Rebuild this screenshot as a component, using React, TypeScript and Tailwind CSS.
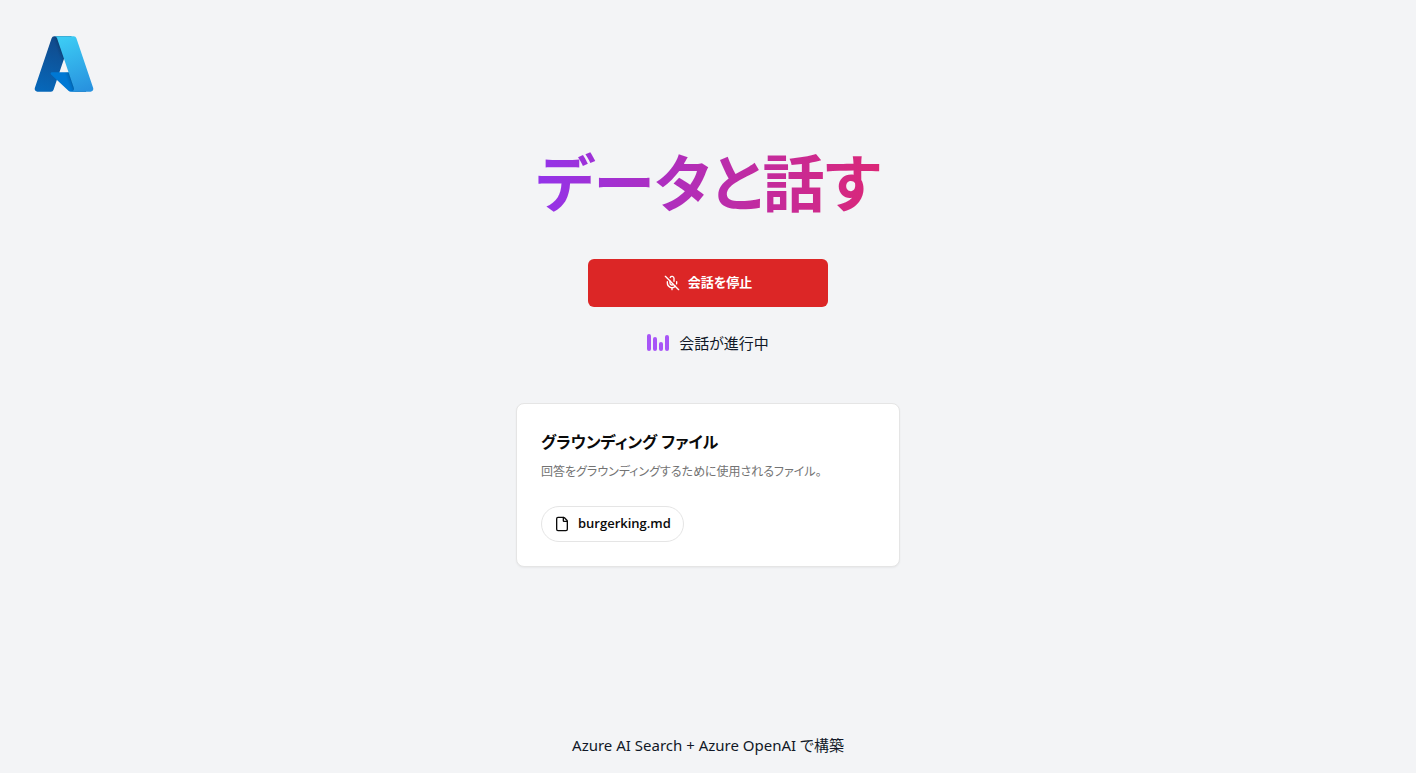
import { File, MicOff } from 'lucide-react'

const bars = [17, 14, 9, 16]

const files = [{ id: 'burgerking', name: 'burgerking.md' }]

function AzureLogo() {
  return (
    <svg viewBox="0 0 96 96" className="h-16 w-16" role="img" aria-label="Azure">
      <defs>
        <linearGradient id="left" x1="42.8" y1="12.7" x2="15.8" y2="92.6" gradientUnits="userSpaceOnUse">
          <stop offset="0" stopColor="#114a8b" />
          <stop offset="1" stopColor="#0669bc" />
        </linearGradient>
        <linearGradient id="shade" x1="51.6" y1="49.8" x2="45.3" y2="51.9" gradientUnits="userSpaceOnUse">
          <stop offset="0" stopOpacity=".3" />
          <stop offset=".07" stopOpacity=".2" />
          <stop offset=".32" stopOpacity=".1" />
          <stop offset=".62" stopOpacity=".05" />
          <stop offset="1" stopOpacity="0" />
        </linearGradient>
        <linearGradient id="right" x1="48.1" y1="9" x2="77.8" y2="88.5" gradientUnits="userSpaceOnUse">
          <stop offset="0" stopColor="#3ccbf4" />
          <stop offset="1" stopColor="#2892df" />
        </linearGradient>
      </defs>
      <path fill="url(#left)" d="M33.338 6.544h26.038l-27.03 80.087a4.152 4.152 0 0 1-3.933 2.824H8.149a4.145 4.145 0 0 1-3.928-5.47L29.404 9.368a4.152 4.152 0 0 1 3.934-2.825z" />
      <path fill="#0078d4" d="M71.175 60.261h-41.29a1.911 1.911 0 0 0-1.305 3.309l26.532 24.764a4.171 4.171 0 0 0 2.846 1.121h23.38z" />
      <path fill="url(#shade)" d="M33.338 6.544a4.118 4.118 0 0 0-3.943 2.879L4.252 83.917a4.14 4.14 0 0 0 3.908 5.538h20.787a4.443 4.443 0 0 0 3.41-2.9l5.014-14.777 17.91 16.705a4.237 4.237 0 0 0 2.666.972H81.24L71.024 60.261l-29.781.007L59.47 6.544z" />
      <path fill="url(#right)" d="M66.595 9.364a4.145 4.145 0 0 0-3.928-2.82H33.648a4.146 4.146 0 0 1 3.928 2.82l25.184 74.62a4.146 4.146 0 0 1-3.928 5.472h29.02a4.146 4.146 0 0 0 3.927-5.472z" />
    </svg>
  )
}

export default function App() {
  return (
    <div className="flex min-h-screen flex-col bg-gray-100 font-['Open_Sans','Noto_Sans_CJK_JP',sans-serif] text-[#111827] [font-feature-settings:'palt']">
      <header className="p-8">
        <AzureLogo />
      </header>

      <main className="flex flex-1 flex-col items-center px-4 pt-[19px]">
        <h1 className="mb-10 bg-linear-[to_right,#9333ea,#db2777] bg-clip-text text-[62px] leading-[72px] font-bold text-transparent">
          データと話す
        </h1>

        <button
          type="button"
          className="flex h-12 w-60 items-center justify-center gap-2 rounded-md bg-[#dc2626] text-[13px] font-bold text-white hover:bg-[#b91c1c]"
        >
          <MicOff className="h-4 w-4" />
          会話を停止
        </button>

        {/* Status */}
        <div className="mt-6 mb-12 flex h-6 items-center">
          <div className="mr-2.5 flex h-4 items-end gap-0.5">
            {bars.map((height, i) => (
              <div key={i} className="w-1 rounded-full bg-[#a855f7]" style={{ height }} />
            ))}
          </div>
          <p className="text-[15px]">会話が進行中</p>
        </div>

        {/* Grounding files */}
        <section className="w-full max-w-96 rounded-lg border border-neutral-200 bg-white p-6 text-neutral-950 shadow-xs">
          <h2 className="text-[16px] leading-7 font-bold">グラウンディング ファイル</h2>
          <p className="mt-1.5 text-[12px] leading-5 text-neutral-500">
            回答をグラウンディングするために使用されるファイル。
          </p>
          <div className="mt-6 flex flex-wrap gap-2">
            {files.map((f) => (
              <button
                key={f.id}
                type="button"
                className="flex h-9 items-center gap-2 rounded-full border border-neutral-200 bg-white px-3 text-[13px] font-semibold hover:bg-neutral-100"
              >
                <File className="h-4 w-4" />
                {f.name}
              </button>
            ))}
          </div>
        </section>
      </main>

      <footer className="py-4 text-center">
        <p className="font-['Noto_Sans','Noto_Sans_CJK_JP',sans-serif] text-[15px] leading-6">
          Azure AI Search + Azure OpenAI で構築
        </p>
      </footer>
    </div>
  )
}
